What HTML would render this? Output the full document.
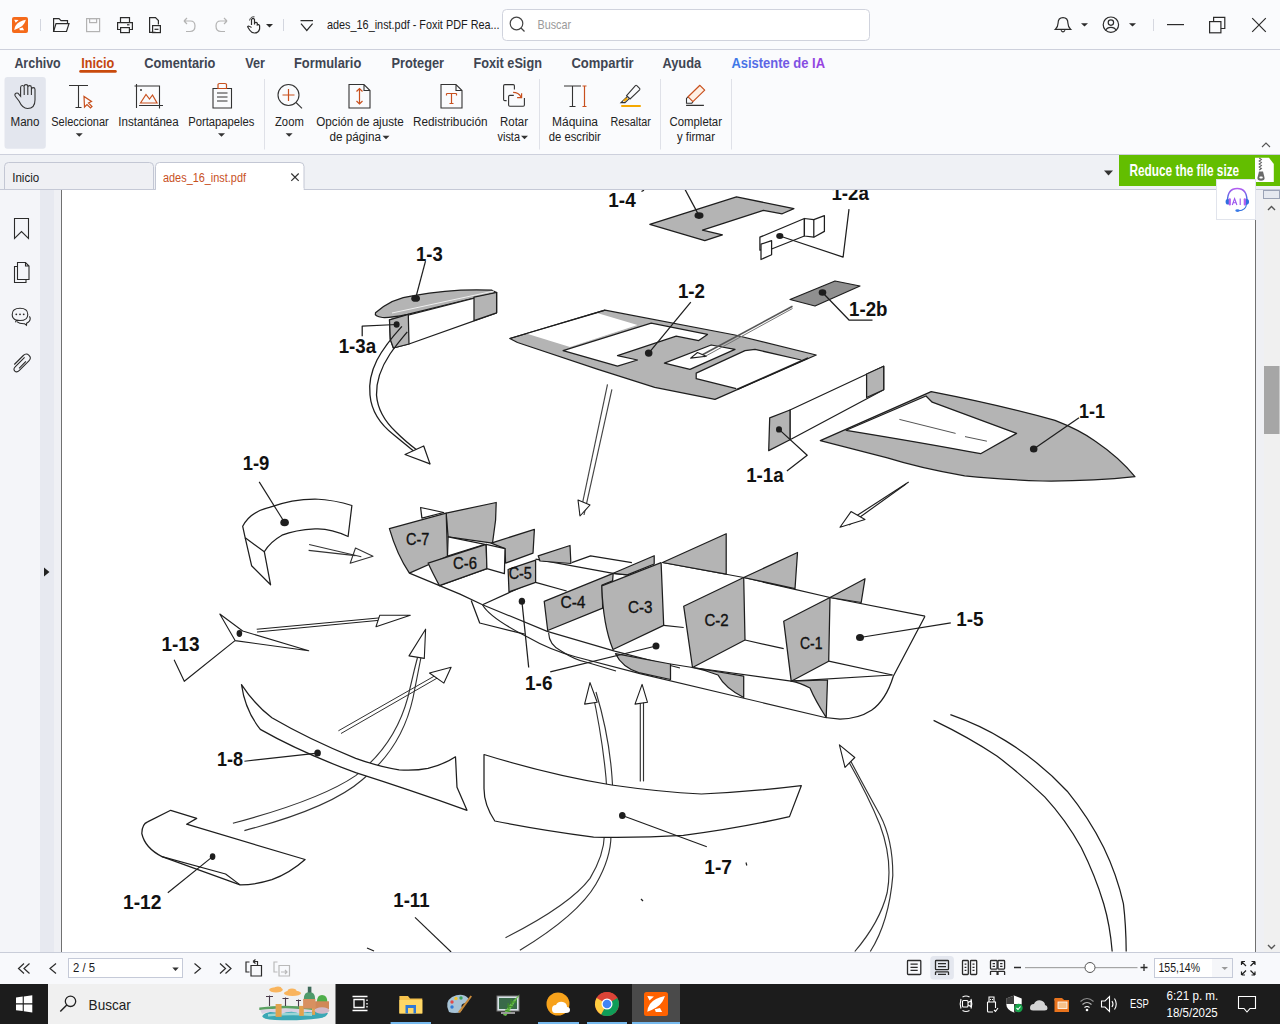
<!DOCTYPE html>
<html><head><meta charset="utf-8">
<style>
*{margin:0;padding:0}
html,body{width:1280px;height:1024px;overflow:hidden;background:#f9f9fc}
svg{position:absolute;left:0;top:0;font-family:"Liberation Sans",sans-serif}
</style></head><body>
<svg width="1280" height="1024" viewBox="0 0 1280 1024">

<rect x="0" y="0" width="1280" height="1024" fill="#fafbfd"/>
<rect x="0" y="49" width="1280" height="1" fill="#cdd0dc"/>
<rect x="0" y="154" width="1280" height="1" fill="#cdd0dc"/>
<rect x="0" y="155" width="1280" height="35" fill="#eff1f5"/>
<rect x="0" y="189" width="1280" height="1" fill="#c5c9d6"/>
<rect x="0" y="190" width="40" height="762" fill="#f4f5f9"/>
<rect x="40" y="190" width="14" height="762" fill="#e7e9f0"/>
<rect x="54" y="190" width="7" height="762" fill="#eff0f4"/>
<rect x="61" y="190" width="1" height="762" fill="#707070"/>
<rect x="62" y="190" width="1193" height="762" fill="#ffffff"/>
<rect x="1255" y="190" width="1" height="762" fill="#707070"/>
<rect x="1256" y="190" width="8" height="762" fill="#eff0f4"/>
<rect x="1264" y="190" width="16" height="762" fill="#f0f0f0"/>
<defs><clipPath id="pg"><rect x="62" y="190" width="1193" height="762"/></clipPath></defs><g clip-path="url(#pg)"><polygon points="649.8,224.3 736.5,196.9 793.9,208.6 782.2,213.8 763.4,210.3 702.5,230.2 722.4,234.9 704.8,240.7" fill="#b4b4b4" stroke="#1e1e1e" stroke-width="1.25" stroke-linejoin="round"/><ellipse cx="699" cy="215.6" rx="4.5" ry="3.3" fill="#1e1e1e"/><polyline points="699,215.6 684.9,189.2" fill="none" stroke="#1e1e1e" stroke-width="1.25" stroke-linejoin="round"/><text x="608.3" y="206.8" font-size="19.5" font-weight="bold" fill="#111" textLength="27.40000000000009" lengthAdjust="spacingAndGlyphs" >1-4</text><polyline points="641.5,191.5 644,190.2" fill="none" stroke="#1e1e1e" stroke-width="1.25" stroke-linejoin="round"/><polygon points="759.9,237.2 804.4,218.5 804.4,236 771.6,249 759.9,250.1" fill="#fff" stroke="#1e1e1e" stroke-width="1.25" stroke-linejoin="round"/><polygon points="804.4,218.5 813.8,219.6 824.4,215.6 824.4,231.4 813.8,237.2 804.4,236" fill="#fff" stroke="#1e1e1e" stroke-width="1.25" stroke-linejoin="round"/><polyline points="813.8,219.6 813.8,237.2" fill="none" stroke="#1e1e1e" stroke-width="1.25" stroke-linejoin="round"/><polygon points="761,244.2 771.6,240.7 771.6,254.8 761,259.5" fill="#fff" stroke="#1e1e1e" stroke-width="1.25" stroke-linejoin="round"/><ellipse cx="779.8" cy="236" rx="3.6" ry="3" fill="#1e1e1e"/><polyline points="779.8,236 843.1,257.1 849,209.1" fill="none" stroke="#1e1e1e" stroke-width="1.25" stroke-linejoin="round"/><text x="831.4" y="199.7" font-size="19.5" font-weight="bold" fill="#111" textLength="37.5" lengthAdjust="spacingAndGlyphs" >1-2a</text><polygon points="790,299.5 835,281 860,286 815,306" fill="#8f8f8f" stroke="#1e1e1e" stroke-width="1.25" stroke-linejoin="round"/><ellipse cx="822.5" cy="292.5" rx="3.8" ry="3.3" fill="#1e1e1e"/><polyline points="822.5,292.5 849,320 872.5,320" fill="none" stroke="#1e1e1e" stroke-width="1.25" stroke-linejoin="round"/><text x="849" y="316" font-size="19.5" font-weight="bold" fill="#111" textLength="38.5" lengthAdjust="spacingAndGlyphs" >1-2b</text><polygon points="509.8,338.5 605,310.2 735,335 816.2,355 715,399.4 654.7,387.3 598,369.3 517.5,342.5" fill="#b4b4b4" stroke="#1e1e1e" stroke-width="1.25" stroke-linejoin="round"/><polygon points="527,333.8 598,313.2 637.5,325 570,346.9" fill="#fff" stroke="none" stroke-width="1.25" stroke-linejoin="round"/><polyline points="509.8,338.5 605,310.2" fill="none" stroke="#1e1e1e" stroke-width="1.25" stroke-linejoin="round"/><polygon points="563.1,350.6 651.2,323.1 707.5,334.4 698.7,340.6 676.2,336.2 617.5,355.6 637.5,360 617.5,366.2" fill="#fff" stroke="#1e1e1e" stroke-width="1.25" stroke-linejoin="round"/><polygon points="664.4,363.1 711.2,345 735,349.4 690,369.4" fill="#fff" stroke="#1e1e1e" stroke-width="1.25" stroke-linejoin="round"/><polygon points="696.2,373.1 745,350.6 755,349.4 801.2,360 736.2,388.7 696.2,378.7" fill="#fff" stroke="none" stroke-width="1.25" stroke-linejoin="round"/><polyline points="736.2,388.7 696.2,378.7 696.2,373.1 745,350.6 755,349.4 801.2,360" fill="none" stroke="#1e1e1e" stroke-width="1.25" stroke-linejoin="round"/><polyline points="737,389.5 808,358" fill="none" stroke="#1e1e1e" stroke-width="1.4" stroke-linejoin="round"/><ellipse cx="648.7" cy="353.1" rx="3.8" ry="3.6" fill="#1e1e1e"/><polyline points="648.7,353.1 690.8,302.2" fill="none" stroke="#1e1e1e" stroke-width="1.25" stroke-linejoin="round"/><text x="677.9" y="298.4" font-size="19.5" font-weight="bold" fill="#111" textLength="27.100000000000023" lengthAdjust="spacingAndGlyphs" >1-2</text><polyline points="792.5,306.2 702,355" fill="none" stroke="#555" stroke-width="1.6" stroke-linejoin="round"/><polyline points="792.5,308.5 704,357" fill="none" stroke="#777" stroke-width="1.0" stroke-linejoin="round"/><polygon points="690.6,358.1 706.2,356.2 697.5,352.5" fill="#fff" stroke="#1e1e1e" stroke-width="1.1" stroke-linejoin="round"/><path d="M375.5 312.8 Q392 298 413.8 295.6 Q452 288.5 491.9 290.2 L496.6 292.5 L407.5 314.4 Q390 318 382.5 317.5 Q374 316.5 375.5 312.8 Z" fill="#b4b4b4" stroke="#1e1e1e" stroke-width="1.25" stroke-linejoin="round"/><polyline points="392,313 494,291" fill="none" stroke="#f0f0f0" stroke-width="1.0" stroke-linejoin="round"/><polygon points="389.5,319.8 496.6,292.5 496.6,312.8 409,344 393.4,348 390.3,339.4" fill="#fff" stroke="#1e1e1e" stroke-width="1.25" stroke-linejoin="round"/><polygon points="389.5,319.8 408.3,314.4 409,344 393.4,348 390.3,339.4" fill="#b4b4b4" stroke="#1e1e1e" stroke-width="1.25" stroke-linejoin="round"/><polygon points="474,297.2 496.6,292.5 496.6,312.8 474,320.6" fill="#b4b4b4" stroke="#1e1e1e" stroke-width="1.25" stroke-linejoin="round"/><ellipse cx="415.6" cy="298.4" rx="4.4" ry="3.4" fill="#1e1e1e"/><polyline points="415.6,298.4 425.5,261.2" fill="none" stroke="#1e1e1e" stroke-width="1.25" stroke-linejoin="round"/><text x="416" y="260.5" font-size="19.5" font-weight="bold" fill="#111" textLength="26.69999999999999" lengthAdjust="spacingAndGlyphs" >1-3</text><ellipse cx="396.6" cy="324.5" rx="3" ry="3.2" fill="#1e1e1e"/><polyline points="396.6,324.5 362.2,326.1 362.2,336.2" fill="none" stroke="#1e1e1e" stroke-width="1.25" stroke-linejoin="round"/><text x="338.7" y="352.7" font-size="19.5" font-weight="bold" fill="#111" textLength="37.5" lengthAdjust="spacingAndGlyphs" >1-3a</text><path d="M401.9 326.4 Q385 345 377 360 Q368 378 370 395 Q372 418 394 435 Q412 450 430 463.9" fill="none" stroke="#1e1e1e" stroke-width="1.3" stroke-linejoin="round"/><path d="M407.3 331.9 Q397 344 390 354 Q376 375 376.5 395 Q378 415 396 432 Q405 441 417.5 450.6" fill="none" stroke="#1e1e1e" stroke-width="1.3" stroke-linejoin="round"/><polygon points="405,454.5 423.7,446 430,463.9" fill="#fff" stroke="#1e1e1e" stroke-width="1.25" stroke-linejoin="round"/><path d="M820.3 440.6 L931.2 391.6 Q1000 405 1055 420.3 Q1080 430 1095 441 Q1120 458 1134.9 476.7 Q1090 481.5 1042 481 Q1000 479.5 964.7 475.8 Q920 468 887.4 457.8 Z" fill="#b4b4b4" stroke="#1e1e1e" stroke-width="1.25" stroke-linejoin="round"/><path d="M846.2 430.3 L926 396 L932.2 402.2 L1016.6 433.4 L980.6 453.7 Q930 444 846.2 430.3 Z" fill="#fff" stroke="#1e1e1e" stroke-width="1.25" stroke-linejoin="round"/><polyline points="899.4,419.4 955.6,433.4" fill="none" stroke="#555" stroke-width="1.0" stroke-linejoin="round"/><polyline points="965,436.6 986.9,441.2" fill="none" stroke="#555" stroke-width="1.0" stroke-linejoin="round"/><ellipse cx="1033.7" cy="449" rx="3.8" ry="3.6" fill="#1e1e1e"/><polyline points="1033.7,449 1079,417.8" fill="none" stroke="#1e1e1e" stroke-width="1.25" stroke-linejoin="round"/><text x="1079" y="417.8" font-size="19.5" font-weight="bold" fill="#111" textLength="26" lengthAdjust="spacingAndGlyphs" >1-1</text><polygon points="790,410 883.7,366.2 883.7,389.7 790,439.7" fill="#fff" stroke="#1e1e1e" stroke-width="1.25" stroke-linejoin="round"/><polygon points="769.7,417.8 790,410 790,439.7 768.7,450.6" fill="#b4b4b4" stroke="#1e1e1e" stroke-width="1.25" stroke-linejoin="round"/><polygon points="866.6,374 883.7,366.2 883.7,389.7 866.6,397.5" fill="#b4b4b4" stroke="#1e1e1e" stroke-width="1.25" stroke-linejoin="round"/><ellipse cx="779" cy="429.4" rx="3" ry="3.2" fill="#1e1e1e"/><polyline points="779,429.4 807.2,455.3 786.9,471" fill="none" stroke="#1e1e1e" stroke-width="1.25" stroke-linejoin="round"/><text x="746.2" y="481.9" font-size="19.5" font-weight="bold" fill="#111" textLength="37.5" lengthAdjust="spacingAndGlyphs" >1-1a</text><polyline points="908.7,481.9 847,522" fill="none" stroke="#1e1e1e" stroke-width="1.15" stroke-linejoin="round"/><polyline points="906,484 849,525" fill="none" stroke="#1e1e1e" stroke-width="1.15" stroke-linejoin="round"/><polygon points="851,511.6 840,527.2 865,519.4" fill="#fff" stroke="#1e1e1e" stroke-width="1.1" stroke-linejoin="round"/><polyline points="607.5,384.4 580,515" fill="none" stroke="#444" stroke-width="1.15" stroke-linejoin="round"/><polyline points="611.9,389.4 584,515" fill="none" stroke="#444" stroke-width="1.15" stroke-linejoin="round"/><polygon points="578,500 580,516 590,505" fill="#fff" stroke="#1e1e1e" stroke-width="1.1" stroke-linejoin="round"/></g><g clip-path="url(#pg)"><polyline points="409.4,573.1 460,594.1 482.5,604.7" fill="none" stroke="#1e1e1e" stroke-width="1.25" stroke-linejoin="round"/><polyline points="482.5,604.7 526.1,585" fill="none" stroke="#1e1e1e" stroke-width="1.25" stroke-linejoin="round"/><polyline points="482.5,604.7 547.2,631.4 614.7,651.1 680,668" fill="none" stroke="#222" stroke-width="1.15" stroke-linejoin="round"/><path d="M482.5 604.7 Q490 618 527.5 637 Q550 650 575.3 656.7 L640 673.6 L825 717.5" fill="none" stroke="#222" stroke-width="1.15" stroke-linejoin="round"/><polyline points="471.2,600.5 479.7,623 524.7,634.2" fill="none" stroke="#1e1e1e" stroke-width="1.25" stroke-linejoin="round"/><path d="M548.6 632.8 Q549 645 561.2 651 Q575 660 586.6 662.3 L616 671" fill="none" stroke="#222" stroke-width="1.15" stroke-linejoin="round"/><polyline points="535.6,582.4 566.6,591" fill="none" stroke="#1e1e1e" stroke-width="1.25" stroke-linejoin="round"/><polyline points="663.7,625.4 683.7,627.5" fill="none" stroke="#1e1e1e" stroke-width="1.25" stroke-linejoin="round"/><polyline points="745,640 783.7,648.7" fill="none" stroke="#1e1e1e" stroke-width="1.25" stroke-linejoin="round"/><polyline points="828.7,661.2 892.5,675" fill="none" stroke="#1e1e1e" stroke-width="1.25" stroke-linejoin="round"/><polyline points="692.5,667.5 791.2,681.2 892.5,675" fill="none" stroke="#1e1e1e" stroke-width="1.25" stroke-linejoin="round"/><polyline points="670.5,664 692.5,667.5" fill="none" stroke="#1e1e1e" stroke-width="1.25" stroke-linejoin="round"/><polyline points="439.4,585.6 486.9,568.7" fill="none" stroke="#1e1e1e" stroke-width="1.25" stroke-linejoin="round"/><polyline points="535.6,559.2 613.2,573.3 627.3,574.8" fill="none" stroke="#1e1e1e" stroke-width="1.25" stroke-linejoin="round"/><polyline points="571.7,562.7 590.6,555.8 631.9,562.7" fill="none" stroke="#1e1e1e" stroke-width="1.25" stroke-linejoin="round"/><polyline points="662.5,562.5 743.7,577.5 830,597.5 925,616.2" fill="none" stroke="#1e1e1e" stroke-width="1.25" stroke-linejoin="round"/><path d="M925 616.2 L893.3 676.2 Q886 700 871.5 710.3 Q858 719 840 719.2 L825 717.5" fill="none" stroke="#1e1e1e" stroke-width="1.25" stroke-linejoin="round"/><path d="M615.5 653.7 L670.5 664 L670.5 679.5 L638.7 672.7 Q622 667 615.5 653.7 Z" fill="#b4b4b4" stroke="#1e1e1e" stroke-width="1.25" stroke-linejoin="round"/><path d="M692.5 667.5 L743.7 676.2 L743.7 697.5 Q725 688 718 675 Q705 670 692.5 667.5 Z" fill="#b4b4b4" stroke="#1e1e1e" stroke-width="1.25" stroke-linejoin="round"/><path d="M791.2 681.2 L827.5 680 L826.2 717.5 Q815 700 810 688 Q800 683 791.2 681.2 Z" fill="#b4b4b4" stroke="#1e1e1e" stroke-width="1.25" stroke-linejoin="round"/><polygon points="446.2,513.1 496.2,502.5 495.6,520 492.5,543.1 448.1,536.9" fill="#b4b4b4" stroke="#1e1e1e" stroke-width="1.25" stroke-linejoin="round"/><polygon points="420.6,507.5 443.7,512.5 421.9,518.1" fill="#fff" stroke="#1e1e1e" stroke-width="1.25" stroke-linejoin="round"/><polygon points="491.2,543.1 534.4,529.4 533,553.2 505.6,563.1 505,548.7" fill="#b4b4b4" stroke="#1e1e1e" stroke-width="1.25" stroke-linejoin="round"/><polygon points="538.2,555.8 570,545.5 570.9,563.5 540,561" fill="#b4b4b4" stroke="#1e1e1e" stroke-width="1.25" stroke-linejoin="round"/><polygon points="613.2,573.3 654.2,555.7 654.2,564 627.3,574.8" fill="#b4b4b4" stroke="#1e1e1e" stroke-width="1.25" stroke-linejoin="round"/><polygon points="662.5,562.5 726.2,533.7 726.2,574.2" fill="#b4b4b4" stroke="#1e1e1e" stroke-width="1.25" stroke-linejoin="round"/><polygon points="743.7,577.5 797.5,552.5 795,588.7" fill="#b4b4b4" stroke="#1e1e1e" stroke-width="1.25" stroke-linejoin="round"/><polygon points="830,597.5 865,578.7 861.2,602.5" fill="#b4b4b4" stroke="#1e1e1e" stroke-width="1.25" stroke-linejoin="round"/><path d="M389.4 528.7 L446.2 513.1 L447.5 556.2 L409.4 573.1 Q397 555 389.4 528.7 Z" fill="#b4b4b4" stroke="#1e1e1e" stroke-width="1.25" stroke-linejoin="round"/><polygon points="448.1,536.9 485,544.4 447.5,556.2" fill="#fff" stroke="#1e1e1e" stroke-width="1.25" stroke-linejoin="round"/><path d="M428.1 563.1 L486.2 544.4 L486.9 568.7 L439.4 585.6 Q432 572 428.1 563.1 Z" fill="#b4b4b4" stroke="#1e1e1e" stroke-width="1.25" stroke-linejoin="round"/><polygon points="486.2,544.4 505,548.7 504.4,573.7 486.9,568.7" fill="#fff" stroke="#1e1e1e" stroke-width="1.25" stroke-linejoin="round"/><polygon points="508.1,569.5 535.6,560.1 535.6,582.4 509,591.9" fill="#b4b4b4" stroke="#1e1e1e" stroke-width="1.25" stroke-linejoin="round"/><polygon points="544.2,601.3 613.2,573.3 612.6,580.9 602,585 602.7,608.2 547.7,630.5" fill="#b4b4b4" stroke="#1e1e1e" stroke-width="1.25" stroke-linejoin="round"/><path d="M601.8 585.9 L661.1 562.7 L663.7 625.4 L613 649.5 Q603 625 601.8 585.9 Z" fill="#b4b4b4" stroke="#1e1e1e" stroke-width="1.25" stroke-linejoin="round"/><polygon points="683.7,606.2 743.7,577.5 745,640 692.5,667.5" fill="#b4b4b4" stroke="#1e1e1e" stroke-width="1.25" stroke-linejoin="round"/><polygon points="783.7,621.2 830,597.5 828.7,661.2 791.2,681.2" fill="#b4b4b4" stroke="#1e1e1e" stroke-width="1.25" stroke-linejoin="round"/><text x="406" y="545" font-size="15.6" font-weight="normal" fill="#111" textLength="23.399999999999977" lengthAdjust="spacingAndGlyphs" stroke="#111" stroke-width="0.35">C-7</text><text x="453" y="569.4" font-size="15.6" font-weight="normal" fill="#111" textLength="23.899999999999977" lengthAdjust="spacingAndGlyphs" stroke="#111" stroke-width="0.35">C-6</text><text x="508.7" y="579.4" font-size="15.6" font-weight="normal" fill="#111" textLength="23.19999999999999" lengthAdjust="spacingAndGlyphs" stroke="#111" stroke-width="0.35">C-5</text><text x="560.5" y="607.5" font-size="15.6" font-weight="normal" fill="#111" textLength="25.0" lengthAdjust="spacingAndGlyphs" stroke="#111" stroke-width="0.35">C-4</text><text x="628" y="612.5" font-size="15.6" font-weight="normal" fill="#111" textLength="24.5" lengthAdjust="spacingAndGlyphs" stroke="#111" stroke-width="0.35">C-3</text><text x="704.5" y="626.2" font-size="15.6" font-weight="normal" fill="#111" textLength="24.200000000000045" lengthAdjust="spacingAndGlyphs" stroke="#111" stroke-width="0.35">C-2</text><text x="800" y="648.7" font-size="15.6" font-weight="normal" fill="#111" textLength="22.5" lengthAdjust="spacingAndGlyphs" stroke="#111" stroke-width="0.35">C-1</text><ellipse cx="521.9" cy="601.3" rx="3.2" ry="3.5" fill="#1e1e1e"/><polyline points="521.9,601.3 528.7,667.5" fill="none" stroke="#1e1e1e" stroke-width="1.25" stroke-linejoin="round"/><ellipse cx="656" cy="646" rx="3.5" ry="3.5" fill="#1e1e1e"/><polyline points="656,646 550.2,671.8" fill="none" stroke="#1e1e1e" stroke-width="1.25" stroke-linejoin="round"/><text x="525" y="690" font-size="19.5" font-weight="bold" fill="#111" textLength="27.5" lengthAdjust="spacingAndGlyphs" >1-6</text><ellipse cx="860" cy="637.5" rx="4" ry="3.6" fill="#1e1e1e"/><polyline points="860,637.5 950.8,622.8" fill="none" stroke="#1e1e1e" stroke-width="1.25" stroke-linejoin="round"/><text x="956.2" y="625.8" font-size="19.5" font-weight="bold" fill="#111" textLength="27.399999999999977" lengthAdjust="spacingAndGlyphs" >1-5</text></g><g clip-path="url(#pg)"><path d="M242.7 526.3 Q250 512 269.4 507.3 Q292 499 315 499 Q335 500 351.9 505.5 L348.1 536.5 Q330 528 315 528.9 Q295 530 282 535.2 Q270 542 264.3 551.7 L245.2 537.8 Z" fill="#fff" stroke="#1e1e1e" stroke-width="1.25" stroke-linejoin="round"/><polyline points="245.2,537.8 251.6,565.7 270.6,584.8 264.3,551.7" fill="none" stroke="#1e1e1e" stroke-width="1.25" stroke-linejoin="round"/><ellipse cx="284.6" cy="522.5" rx="4.3" ry="3.8" fill="#1e1e1e"/><polyline points="284.6,522.5 259.2,481.9" fill="none" stroke="#1e1e1e" stroke-width="1.15" stroke-linejoin="round"/><text x="242.7" y="470" font-size="19.5" font-weight="bold" fill="#111" textLength="26.69999999999999" lengthAdjust="spacingAndGlyphs" >1-9</text><polygon points="355.5,548 373,556.2 350.2,563.3" fill="#fff" stroke="#333" stroke-width="1.1" stroke-linejoin="round"/><polyline points="309.1,544.5 361.3,556.8" fill="none" stroke="#333" stroke-width="1.1" stroke-linejoin="round"/><polyline points="308.6,550.4 355.5,555.6" fill="none" stroke="#333" stroke-width="1.1" stroke-linejoin="round"/><polygon points="219.8,614 235.1,640.6 308.7,650.8 242.7,631" fill="#fff" stroke="#1e1e1e" stroke-width="1.1" stroke-linejoin="round"/><ellipse cx="239.4" cy="633.5" rx="2.8" ry="3.4" fill="#1e1e1e"/><polyline points="235,640.6 184.3,681.3 174.1,659.7" fill="none" stroke="#1e1e1e" stroke-width="1.15" stroke-linejoin="round"/><text x="161.4" y="650.8" font-size="19.5" font-weight="bold" fill="#111" textLength="38.099999999999994" lengthAdjust="spacingAndGlyphs" >1-13</text><polyline points="256.7,629.2 400,616" fill="none" stroke="#1e1e1e" stroke-width="1.15" stroke-linejoin="round"/><polyline points="257,632 398,618.5" fill="none" stroke="#1e1e1e" stroke-width="1.15" stroke-linejoin="round"/><polygon points="376,626.7 410.3,615.2 379.8,615.2" fill="#fff" stroke="#1e1e1e" stroke-width="1.1" stroke-linejoin="round"/><path d="M232.9 823.3 Q320 800 355.7 775.6 Q395 745 407.8 697.6 Q414 670 422 640" fill="none" stroke="#333" stroke-width="1.15" stroke-linejoin="round"/><path d="M244.4 830.6 Q330 808 362 780 Q402 748 413 698 Q418 672 424 642" fill="none" stroke="#333" stroke-width="1.15" stroke-linejoin="round"/><polygon points="409,655.9 425.6,629.2 424.3,658.4" fill="#fff" stroke="#1e1e1e" stroke-width="1.1" stroke-linejoin="round"/><polyline points="338.4,730.8 445,670" fill="none" stroke="#333" stroke-width="1.0" stroke-linejoin="round"/><polyline points="341,733.5 446,673" fill="none" stroke="#333" stroke-width="1.0" stroke-linejoin="round"/><polygon points="429.5,673 451.1,667.2 443.9,683.1" fill="#fff" stroke="#1e1e1e" stroke-width="1.1" stroke-linejoin="round"/><path d="M241.5 684.6 Q255 705 271.9 717.8 Q310 740 355.7 758.3 Q380 767 399.1 769.9 Q415 771 428 768.4 Q445 764 455.5 756.8 L457 787.2 L467 810.3 Q410 790 355.7 772.7 Q300 752 260.3 729.4 Q245 710 241.5 684.6 Z" fill="#fff" stroke="#1e1e1e" stroke-width="1.25" stroke-linejoin="round"/><ellipse cx="317.6" cy="753.1" rx="3.3" ry="3.5" fill="#1e1e1e"/><polyline points="317.6,753.1 244.4,761.2" fill="none" stroke="#1e1e1e" stroke-width="1.15" stroke-linejoin="round"/><text x="217" y="766.4" font-size="19.5" font-weight="bold" fill="#111" textLength="26" lengthAdjust="spacingAndGlyphs" >1-8</text><path d="M170.7 810.3 L196.7 818.4 L186.6 824.2 L305.1 859.5 Q290 873 271.9 879.7 Q255 885 240.1 884.9 L162 856.6 Q145 848 141.8 833.5 Q142 824 147.6 821.9 Z" fill="#fff" stroke="#1e1e1e" stroke-width="1.25" stroke-linejoin="round"/><polyline points="162,856.6 225.6,874 240.1,884.9" fill="none" stroke="#1e1e1e" stroke-width="1.15" stroke-linejoin="round"/><ellipse cx="212.6" cy="856.6" rx="2.8" ry="3.4" fill="#1e1e1e"/><polyline points="212.6,856.6 167.8,892.7" fill="none" stroke="#1e1e1e" stroke-width="1.15" stroke-linejoin="round"/><text x="123" y="909.2" font-size="19.5" font-weight="bold" fill="#111" textLength="38.5" lengthAdjust="spacingAndGlyphs" >1-12</text><text x="393.3" y="907.2" font-size="19.5" font-weight="bold" fill="#111" textLength="36.19999999999999" lengthAdjust="spacingAndGlyphs" >1-11</text><polyline points="415,917.3 451.1,952" fill="none" stroke="#1e1e1e" stroke-width="1.15" stroke-linejoin="round"/><polyline points="367,948 374,951" fill="none" stroke="#1e1e1e" stroke-width="1.25" stroke-linejoin="round"/><path d="M505.5 937.7 Q570 905 590 878.4 Q604 855 604.4 835.3 Q608 800 606 777.8 Q602 735 592 690" fill="none" stroke="#333" stroke-width="1.15" stroke-linejoin="round"/><path d="M519.9 950.3 Q578 915 596 884 Q611 858 611 835 Q614 800 612 777 Q609 735 596 692" fill="none" stroke="#333" stroke-width="1.15" stroke-linejoin="round"/><polygon points="584.6,704.1 590,682.6 597.2,702.3" fill="#fff" stroke="#1e1e1e" stroke-width="1.1" stroke-linejoin="round"/><polyline points="640.3,781.4 640.3,694" fill="none" stroke="#333" stroke-width="1.15" stroke-linejoin="round"/><polyline points="643.5,781.4 643.5,694" fill="none" stroke="#333" stroke-width="1.15" stroke-linejoin="round"/><polygon points="635,704.1 642.1,684.4 647.5,702.3" fill="#fff" stroke="#1e1e1e" stroke-width="1.1" stroke-linejoin="round"/><path d="M484 754.5 Q550 775 611.6 785 Q660 792 701.4 794 Q750 792 801.3 785.7 L789.5 816.6 Q740 828 683.4 835.3 Q640 838 593.6 837.1 Q540 830 494.8 821 Q484 805 484 788.6 Z" fill="#fff" stroke="#1e1e1e" stroke-width="1.25" stroke-linejoin="round"/><ellipse cx="622.3" cy="815.5" rx="3.3" ry="3.6" fill="#1e1e1e"/><polyline points="622.3,815.5 706.8,846.8" fill="none" stroke="#1e1e1e" stroke-width="1.15" stroke-linejoin="round"/><text x="704.3" y="874.1" font-size="19.5" font-weight="bold" fill="#111" textLength="27.700000000000045" lengthAdjust="spacingAndGlyphs" >1-7</text><polyline points="746,862.5 746.8,865.5" fill="none" stroke="#1e1e1e" stroke-width="1.2" stroke-linejoin="round"/><polyline points="641,899 643,901" fill="none" stroke="#1e1e1e" stroke-width="1.25" stroke-linejoin="round"/><path d="M933.6 720.4 Q970 738 996.9 756.1 Q1022 775 1044.7 796.9 Q1066 820 1081.2 847.5 Q1095 875 1103.7 903.7 Q1110 925 1112.2 951.5" fill="none" stroke="#1e1e1e" stroke-width="1.25" stroke-linejoin="round"/><path d="M950.4 714.7 Q980 725 1005.3 740.6 Q1040 762 1067.2 791.2 Q1089 818 1103.7 847.5 Q1117 875 1123.4 903.7 Q1126 925 1126.2 951.5" fill="none" stroke="#1e1e1e" stroke-width="1.25" stroke-linejoin="round"/><path d="M854.8 951.5 Q880 922 887.2 892.5 Q893 860 880 825 Q868 795 846 757" fill="none" stroke="#333" stroke-width="1.15" stroke-linejoin="round"/><path d="M870.3 951.5 Q889 922 892.8 875.6 Q893 840 880 815 Q866 790 848 756" fill="none" stroke="#333" stroke-width="1.15" stroke-linejoin="round"/><polygon points="839.4,744.8 854.8,757.5 845,767.3" fill="#fff" stroke="#1e1e1e" stroke-width="1.1" stroke-linejoin="round"/></g>
<rect x="12" y="17" width="16" height="16" rx="2" fill="#f56a1a"/>
<path d="M14.2 19.7 L18.6 19.9 L15.7 22.7 Z M19.2 28.5 L22.7 27.6 L24.1 30.3 L19.9 30.3 Z" fill="#fff"/>
<path d="M14.2 30.1 Q14.7 24.3 20 21.7 Q22.7 20.3 25.9 19.7 Q25 22.3 24.2 23.5 Q22.3 26.3 20.2 27.3 Q17.3 29 14.2 30.1 Z" fill="#fff"/>
<line x1="40.5" y1="19" x2="40.5" y2="31" stroke="#d3d6df"/>
<g fill="none" stroke="#2b2b2b" stroke-width="1.2">
 <path d="M53.6 31.5 V18.6 H59 L61 20.6 H67.5 V23.5"/><path d="M53.6 31.5 L56 23.6 H69 L66.5 31.5 Z"/>
 <path d="M120.5 29.5 H117.6 V22.6 H132.4 V29.5 H129.5"/><path d="M120.5 22.5 V17.6 H129.5 V22.5"/><rect x="120.6" y="27.6" width="8.8" height="5"/><line x1="127" y1="24.8" x2="129.5" y2="24.8"/>
 <path d="M155.5 32.4 H149.6 V17.6 H155.5 L158.4 20.5 V24.5"/><rect x="152.6" y="25.6" width="7.8" height="7"/><line x1="154.5" y1="29.3" x2="158.5" y2="29.3"/>
 <path d="M251.5 25 V19.6 Q253 17.3 254.5 19.6 V24.5 M254.5 23 Q256 21.6 257.3 23.2 V25 Q258.8 24 259.6 25.7 V29 Q258.5 33 254.5 33 Q251.5 33 249.8 30.3 L247.6 26.8 Q248.5 25.3 251.5 27.5"/>
 <path d="M249.5 20.5 Q250.5 16.3 254.5 16.8" stroke-width="0.9"/>
</g>
<g fill="none" stroke="#b3b3b3" stroke-width="1.2">
 <rect x="86.6" y="18.6" width="13" height="13"/><rect x="89.6" y="18.6" width="7" height="4"/>
 <path d="M184 21 H190.5 Q195 21 195 26 Q195 31.5 190 31.5 H186 M184 21 L187 18 M184 21 L187 24"/>
 <path d="M227 21 H220.5 Q216 21 216 26 Q216 31.5 221 31.5 H225 M227 21 L224 18 M227 21 L224 24"/>
</g>
<path d="M266 24 H273 L269.5 27.5 Z" fill="#2b2b2b"/>
<line x1="283.5" y1="19" x2="283.5" y2="31" stroke="#d3d6df"/>
<path d="M300.5 20.6 H313 M301 23.6 L306.8 30.5 L312.6 23.6" fill="none" stroke="#2b2b2b" stroke-width="1.2"/>
<text x="327" y="29.3" font-size="13" font-weight="normal" fill="#1a1a1a" textLength="172.6" lengthAdjust="spacingAndGlyphs" >ades_16_inst.pdf - Foxit PDF Rea...</text>
<rect x="502.5" y="9.5" width="367" height="31" rx="4" fill="#fff" stroke="#d0d3dd"/>
<circle cx="516.5" cy="23.5" r="6.3" fill="none" stroke="#444" stroke-width="1.2"/><line x1="521" y1="28" x2="524.5" y2="31.5" stroke="#444" stroke-width="1.3"/>
<text x="537.5" y="29.3" font-size="13" font-weight="normal" fill="#9a9a9a" textLength="33.5" lengthAdjust="spacingAndGlyphs" >Buscar</text>
<g fill="none" stroke="#2b2b2b" stroke-width="1.2">
 <path d="M1055.3 29.4 H1070.7 Q1068 27 1067.9 23 Q1067.9 17.6 1063 17.6 Q1058.1 17.6 1058.1 23 Q1058 27 1055.3 29.4 Z M1061 30.3 Q1063 33.5 1065 30.3"/>
 <circle cx="1110.9" cy="24.7" r="7.7"/><circle cx="1110.9" cy="22.6" r="2.7"/><path d="M1105.6 30.4 Q1107 27.3 1110.9 27.3 Q1114.8 27.3 1116.2 30.4"/>
 <line x1="1167" y1="24.6" x2="1184" y2="24.6"/>
 <rect x="1209.6" y="21.6" width="11.3" height="11.2"/><path d="M1213.6 21.6 V17.4 H1224.8 V28.5 H1220.9"/>
 <path d="M1252.2 18.2 L1265.8 31.8 M1265.8 18.2 L1252.2 31.8"/>
</g>
<path d="M1081 23.2 H1088 L1084.5 26.6 Z M1129 23.2 H1136 L1132.5 26.6 Z" fill="#2b2b2b"/>
<line x1="1153.5" y1="19" x2="1153.5" y2="31" stroke="#d6d8e0"/>
<text x="14.4" y="68" font-size="14" font-weight="bold" fill="#404552" textLength="46.300000000000004" lengthAdjust="spacingAndGlyphs" >Archivo</text><text x="144.3" y="68" font-size="14" font-weight="bold" fill="#404552" textLength="71.1" lengthAdjust="spacingAndGlyphs" >Comentario</text><text x="245.2" y="68" font-size="14" font-weight="bold" fill="#404552" textLength="19.80000000000001" lengthAdjust="spacingAndGlyphs" >Ver</text><text x="294" y="68" font-size="14" font-weight="bold" fill="#404552" textLength="67.30000000000001" lengthAdjust="spacingAndGlyphs" >Formulario</text><text x="391.5" y="68" font-size="14" font-weight="bold" fill="#404552" textLength="52.5" lengthAdjust="spacingAndGlyphs" >Proteger</text><text x="473.5" y="68" font-size="14" font-weight="bold" fill="#404552" textLength="68.39999999999998" lengthAdjust="spacingAndGlyphs" >Foxit eSign</text><text x="571.4" y="68" font-size="14" font-weight="bold" fill="#404552" textLength="62.200000000000045" lengthAdjust="spacingAndGlyphs" >Compartir</text><text x="662.4" y="68" font-size="14" font-weight="bold" fill="#404552" textLength="38.80000000000007" lengthAdjust="spacingAndGlyphs" >Ayuda</text><text x="81.2" y="68" font-size="14" font-weight="bold" fill="#c4460d" textLength="33.1" lengthAdjust="spacingAndGlyphs" >Inicio</text><rect x="79.2" y="70" width="37.6" height="2.8" rx="1.4" fill="#c94a0c"/><defs><linearGradient id="ia" x1="0" x2="1" y1="0" y2="0"><stop offset="0" stop-color="#3b7ae8"/><stop offset="1" stop-color="#9a3fe0"/></linearGradient></defs><text x="731.4" y="68" font-size="14" font-weight="bold" fill="url(#ia)" textLength="93.6" lengthAdjust="spacingAndGlyphs" >Asistente de IA</text><rect x="4.5" y="77" width="41.3" height="71.7" rx="3" fill="#e3e6ee"/><line x1="264.5" y1="79" x2="264.5" y2="149.5" stroke="#dfe1e8"/><line x1="539.5" y1="79" x2="539.5" y2="149.5" stroke="#dfe1e8"/><line x1="660.5" y1="79" x2="660.5" y2="149.5" stroke="#dfe1e8"/><line x1="731.5" y1="79" x2="731.5" y2="149.5" stroke="#dfe1e8"/><text x="10.5" y="126" font-size="12.5" font-weight="normal" fill="#222" textLength="29.0" lengthAdjust="spacingAndGlyphs" >Mano</text><text x="51.25" y="126" font-size="12.5" font-weight="normal" fill="#222" textLength="57.5" lengthAdjust="spacingAndGlyphs" >Seleccionar</text><text x="118.25" y="126" font-size="12.5" font-weight="normal" fill="#222" textLength="60.5" lengthAdjust="spacingAndGlyphs" >Instantánea</text><text x="188.25" y="126" font-size="12.5" font-weight="normal" fill="#222" textLength="66.25" lengthAdjust="spacingAndGlyphs" >Portapapeles</text><text x="275" y="126" font-size="12.5" font-weight="normal" fill="#222" textLength="28.75" lengthAdjust="spacingAndGlyphs" >Zoom</text><text x="316.25" y="126" font-size="12.5" font-weight="normal" fill="#222" textLength="87.5" lengthAdjust="spacingAndGlyphs" >Opción de ajuste</text><text x="329.5" y="141" font-size="12.5" font-weight="normal" fill="#222" textLength="51.5" lengthAdjust="spacingAndGlyphs" >de página</text><text x="413" y="126" font-size="12.5" font-weight="normal" fill="#222" textLength="74.5" lengthAdjust="spacingAndGlyphs" >Redistribución</text><text x="500" y="126" font-size="12.5" font-weight="normal" fill="#222" textLength="28" lengthAdjust="spacingAndGlyphs" >Rotar</text><text x="497.5" y="141" font-size="12.5" font-weight="normal" fill="#222" textLength="22.5" lengthAdjust="spacingAndGlyphs" >vista</text><text x="552" y="126" font-size="12.5" font-weight="normal" fill="#222" textLength="46" lengthAdjust="spacingAndGlyphs" >Máquina</text><text x="548.75" y="141" font-size="12.5" font-weight="normal" fill="#222" textLength="52.0" lengthAdjust="spacingAndGlyphs" >de escribir</text><text x="610.5" y="126" font-size="12.5" font-weight="normal" fill="#222" textLength="40.25" lengthAdjust="spacingAndGlyphs" >Resaltar</text><text x="669.5" y="126" font-size="12.5" font-weight="normal" fill="#222" textLength="52.5" lengthAdjust="spacingAndGlyphs" >Completar</text><text x="677" y="141" font-size="12.5" font-weight="normal" fill="#222" textLength="38" lengthAdjust="spacingAndGlyphs" >y firmar</text><path d="M75.75 133.2 H82.75 L79.25 136.8 Z" fill="#333"/><path d="M218.0 133.2 H225.0 L221.5 136.8 Z" fill="#333"/><path d="M285.6 133.2 H292.6 L289.1 136.8 Z" fill="#333"/><path d="M382.5 135.7 H389.5 L386 139.3 Z" fill="#333"/><path d="M521.0 135.7 H528.0 L524.5 139.3 Z" fill="#333"/><g fill="none" stroke="#333" stroke-width="1.1">
<path d="M19 101 L15.5 96.5 Q14 94.5 16 93.3 Q17.6 92.5 19 94.3 L20.6 96.2 V87.5 Q20.6 85.5 22.4 85.5 Q24.2 85.5 24.2 87.5 V95 M24.2 86.5 Q24.2 84.6 26 84.6 Q27.8 84.6 27.8 86.5 V95 M27.8 87.5 Q27.8 85.6 29.6 85.6 Q31.4 85.6 31.4 87.5 V95 M31.4 89.5 Q31.4 87.6 33.2 87.6 Q35 87.6 35 89.5 V100 Q35 108.5 27.5 108.5 Q22.5 108.5 19 101"/>
<path d="M69 85.5 H88 M78.5 85.5 V107.5 M75.5 107.5 H81.5"/>
<path d="M136.5 84 V108 M134.5 86 H159.5 V108.5 M139 105.5 H163"/>
<path d="M213 88.5 H231.5 V108 H213 Z M217 93 H227.5 M217 97 H227.5 M217 101 H227.5"/>
<circle cx="288.5" cy="95" r="10.5"/><path d="M296 102.5 L302 108.3"/>
<path d="M349 84.5 H364 L370 90.5 V108 H349 Z M364 84.5 V90.5 H370"/>
<path d="M441 84.5 H456 L462 90.5 V108 H441 Z M456 84.5 V90.5 H462"/>
<path d="M514.4 89.6 V85.8 Q514.4 84.6 513.2 84.6 H504.8 Q503.6 84.6 503.6 85.8 V99.4 Q503.6 100.6 504.8 100.6 H506.6 M513.8 95.4 H509.8 Q508.6 95.4 508.6 96.6 V105 Q508.6 106.2 509.8 106.2 H523.2 Q524.4 106.2 524.4 105 V98.1"/>
<path d="M564 86 H581 M572.5 86 V106.5 M569.5 106.5 H575.5"/>
<path d="M626.6 95.6 L635.4 85.6 Q636.1 85 636.8 85.6 L639.6 88.4 Q640.2 89.1 639.6 89.8 L630.1 98.9 Z M627.5 96.5 L621 102.6 H625 L629.4 98.3"/>
<path d="M688.1 96.8 L686.5 98.4 V103.2 H691.8 L692.9 101.6 M686.1 105.4 H703.9"/>
</g>
<path d="M688.1 96.8 L699.9 85.3 L704.7 90.1 L692.9 101.6 Z" fill="#fef0e4" stroke="#c8501e" stroke-width="1.2" stroke-linejoin="round"/>
<g fill="none" stroke="#c8501e" stroke-width="1.2">
<path d="M84 96.5 L84.5 107 L87 104.5 L90.5 108 L92 106.5 L88.5 103 L91.5 101.5 Z"/>
<path d="M218 84.5 V88.5 H226.5 V84.5 Q226.5 83.5 225 83.5 H219.5 Q218 83.5 218 84.5 Z"/>
<path d="M140.5 103 L146 94.5 L149.5 99 L152.5 95 L157 103 Z"/>
<path d="M282.5 95 H294.5 M288.5 89 V101"/>
<path d="M359.5 88.5 V104 M356.5 91.5 L359.5 88.5 L362.5 91.5 M356.5 101 L359.5 104 L362.5 101"/>
<path d="M446.5 93.5 H456.5 M446.5 93.5 V95.5 M456.5 93.5 V95.5 M451.5 93.5 V103.5 M449.5 103.5 H453.5"/>
<path d="M513.1 92.4 Q518.5 92.4 521.2 97.2 M521.6 93.3 V97.6 H517.1"/>
<path d="M584.5 86 V106.5 M582.5 86 H586.5 M582.5 106.5 H586.5"/>
</g>
<circle cx="141" cy="90" r="1" fill="#333"/>
<path d="M623 100.5 L626.5 97.5 L628 99 L624.5 101.8 Z" fill="#f5a800"/>
<rect x="621" y="105" width="20" height="2" rx="1" fill="#f5a800"/>
<path d="M1262 147 L1266 143 L1270 147" fill="none" stroke="#555" stroke-width="1.1"/>

<path d="M4.5 189 V166.5 Q4.5 162.5 8.5 162.5 H149.5 Q153.5 162.5 153.5 166.5 V189" fill="#eff0f4" stroke="#c3c7d4" stroke-width="1"/>
<path d="M155.5 189.5 V166.5 Q155.5 162.5 159.5 162.5 H300 Q304 162.5 304 166.5 V189.5" fill="#ffffff" stroke="#c3c7d4" stroke-width="1"/>
<rect x="156" y="188" width="147.5" height="3" fill="#fff"/>
<text x="12.2" y="182" font-size="12.5" font-weight="normal" fill="#1a1a1a" textLength="27" lengthAdjust="spacingAndGlyphs" >Inicio</text><text x="163" y="182" font-size="12.5" font-weight="normal" fill="#c8501e" textLength="83" lengthAdjust="spacingAndGlyphs" >ades_16_inst.pdf</text>
<path d="M291.3 173.5 L298.7 180.9 M298.7 173.5 L291.3 180.9" stroke="#333" stroke-width="1.2"/>
<path d="M1104 170.5 H1113 L1108.5 175.5 Z" fill="#333"/>
<rect x="1119" y="155" width="161" height="31" fill="#63be00"/>
<text x="1129.5" y="176" font-size="17" font-weight="bold" fill="#ffffff" textLength="109.7" lengthAdjust="spacingAndGlyphs" >Reduce the file size</text>
<path d="M1255 157.8 H1269 L1273.8 164 V182 H1255 Z" fill="#fff"/>
<path d="M1259.3 158 L1261.3 159.5 L1259.3 161 L1261.3 162.5 L1259.3 164 L1261.3 165.5 L1259.3 167 L1261.3 168.5 L1259.3 170" fill="none" stroke="#666" stroke-width="1.2"/>
<path d="M1259 171.5 H1263 L1264.6 178 Q1264.6 180.8 1261 180.8 Q1257.4 180.8 1257.4 178 Z" fill="#6a6a6a"/>
<rect x="1259.3" y="176.5" width="3.5" height="2" rx="1" fill="#fff"/>
<rect x="1216.5" y="179.5" width="39" height="40" fill="#ffffff" stroke="#e1e4ec"/>
<defs><linearGradient id="hs" x1="0" y1="0" x2="0" y2="1"><stop offset="0" stop-color="#b25cf0"/><stop offset="1" stop-color="#2d6fe0"/></linearGradient></defs>
<path d="M1227.5 201 Q1227.5 188.5 1237.2 188.5 Q1247 188.5 1247 201" fill="none" stroke="url(#hs)" stroke-width="1.4"/>
<ellipse cx="1227.8" cy="201.8" rx="2.2" ry="2.8" fill="#2f6fdf"/>
<ellipse cx="1246.8" cy="201.8" rx="2.2" ry="2.8" fill="#2f6fdf"/>
<rect x="1228.7" y="198.3" width="2.2" height="7.2" rx="1" fill="#b561f0"/>
<rect x="1243.7" y="198.3" width="2.2" height="7.2" rx="1" fill="#b561f0"/>
<path d="M1246.5 204 Q1246 210.5 1238.5 210.8" fill="none" stroke="#2f6fdf" stroke-width="1.1"/>
<ellipse cx="1237.5" cy="210.6" rx="2.2" ry="1.4" fill="#3a7be8"/>
<path d="M1232.3 205 L1234.6 198.6 L1236.9 205 M1233.1 202.8 H1236.1 M1240.2 198.6 V205" fill="none" stroke="#9a55ee" stroke-width="1.1"/>
<rect x="1263.5" y="190.5" width="16" height="8" fill="#e6e9f0" stroke="#9ba3b6"/>
<path d="M1268 210 L1271.5 206.5 L1275 210" fill="none" stroke="#555" stroke-width="1.4"/>
<path d="M1268 945 L1271.5 948.5 L1275 945" fill="none" stroke="#555" stroke-width="1.4"/>
<rect x="1264" y="366" width="15.5" height="68" fill="#a6a6a6"/>
<g fill="none" stroke="#2b2b2b" stroke-width="1.1">
<path d="M14.5 218.5 H28.5 V238.5 L21.5 231.5 L14.5 238.5 Z"/>
<path d="M17.5 264.5 V262.5 H25.5 L29 266 V279.5 H17.5 Z M25.5 262.5 V266 H29"/>
<path d="M17.5 266.5 H14.5 V282.5 H26 V279.5"/>
<path d="M16.3 320.2 Q12.2 318.4 12.2 314.4 Q12.2 308.3 20 308.3 Q27.8 308.3 27.8 314.4 Q27.8 320.5 20 320.5 Q18 320.5 16.6 320.1 L15.4 322.2"/>
<path d="M29.4 316.3 Q30.2 317.3 30.2 318.6 Q30.2 321.8 26.6 323.2 L26.5 325.2 L24.6 323.7 Q19.5 323.9 16.8 321.6"/>
<path d="M14.3 364.5 L23.3 355.5 Q26.2 352.6 29 355.3 Q31.8 358 28.9 360.9 L19.4 370.4 Q16.8 373 14.8 371.1 Q12.8 369.2 15.4 366.6 L24.6 357.4 M19.1 368.3 L25.9 361.4"/>
</g>
<circle cx="16.3" cy="314.3" r="0.9" fill="#2b2b2b"/><circle cx="20" cy="314.3" r="0.9" fill="#2b2b2b"/><circle cx="23.7" cy="314.3" r="0.9" fill="#2b2b2b"/>
<path d="M44 567.5 L49.5 572 L44 576.5 Z" fill="#222"/>

<rect x="0" y="952" width="1280" height="32" fill="#f8f9fc"/>
<rect x="0" y="952" width="1280" height="1" fill="#c9cdd9"/>
<g fill="none" stroke="#2b2b2b" stroke-width="1.2">
<path d="M24 963.5 L18.5 968.5 L24 973.5 M29.5 963.5 L24 968.5 L29.5 973.5"/>
<path d="M56 963.5 L50 968.5 L56 973.5"/>
<path d="M194.5 963.5 L200.5 968.5 L194.5 973.5"/>
<path d="M220 963.5 L225.5 968.5 L220 973.5 M225.5 963.5 L231 968.5 L225.5 973.5"/>
<path d="M249.5 962 H246 V972 H249.5 M251 965.5 H261.5 V976 H251 Z M253 961.5 L255.5 959.5 M253 961.5 L255.5 963.5 M253 961.5 H257.5 V965"/>
</g>
<g fill="none" stroke="#b9b9b9" stroke-width="1.2">
<path d="M277.5 962 H274 V972 H277.5 M279 965.5 H289.5 V976 H279 Z M281 972 H287 M285 970 L287 972 L285 974"/>
</g>
<rect x="68.5" y="958.5" width="114" height="19" fill="#ffffff" stroke="#c5cad8"/>
<path d="M172.3 967.5 H178.8 L175.5 971 Z" fill="#333"/>
<text x="73" y="972.3" font-size="12.5" font-weight="normal" fill="#1a1a1a" textLength="22" lengthAdjust="spacingAndGlyphs" >2 / 5</text>
<rect x="930.3" y="956" width="23.6" height="23.5" rx="3.5" fill="#e4e7ef"/>
<g fill="none" stroke="#2b2b2b" stroke-width="1.3">
<rect x="907.5" y="960.5" width="13.3" height="14" rx="0.8"/><path d="M910.5 964.2 H917.7 M910.5 967.3 H917.7 M910.5 970.3 H917.7"/>
<rect x="935.5" y="960.5" width="13" height="9.2" rx="0.8"/><path d="M938 963.7 H946 M938 966.6 H946 M935.5 975 V972.5 Q935.5 971.8 936.3 971.8 H947.7 Q948.5 971.8 948.5 972.5 V975 M938 974.3 H946"/>
<rect x="962.5" y="960.5" width="5.8" height="14" rx="0.8"/><rect x="970.5" y="960.5" width="6.2" height="14" rx="0.8"/><path d="M964.6 964.2 H966.4 M964.6 967.3 H966.4 M964.6 970.3 H966.4 M972.5 964.2 H974.5 M972.5 967.3 H974.5 M972.5 970.3 H974.5"/>
<rect x="990.5" y="960.5" width="6.6" height="8.6" rx="0.8"/><rect x="998" y="960.5" width="6.6" height="8.6" rx="0.8"/><path d="M990.5 975 V972 Q990.5 971.3 991.3 971.3 H996.3 Q997.1 971.3 997.1 972 V975 M998 975 V972 Q998 971.3 998.8 971.3 H1003.8 Q1004.6 971.3 1004.6 972 V975 M992.6 963.6 H995 M992.6 966.3 H995 M1000.1 963.6 H1002.5 M1000.1 966.3 H1002.5"/>
<path d="M1014 967.5 H1021 M1140.5 967.5 H1147.5 M1144 964 V971"/>
</g>
<rect x="1025" y="967" width="112.5" height="1.2" fill="#a5a5a5"/>
<circle cx="1090" cy="967.5" r="5" fill="#fff" stroke="#555" stroke-width="1"/>
<rect x="1154.5" y="958.5" width="78" height="19" fill="#ffffff" stroke="#c5cad8"/>
<rect x="1212" y="959" width="20" height="18" fill="#f5f6f9"/>
<path d="M1221.5 967 H1228 L1224.7 970 Z" fill="#999"/>
<text x="1158.5" y="972.3" font-size="12.5" font-weight="normal" fill="#1a1a1a" textLength="41.5" lengthAdjust="spacingAndGlyphs" >155,14%</text>
<g fill="none" stroke="#222" stroke-width="1.2">
<path d="M1241.5 961.5 L1246 966 M1241.5 961.5 V965 M1241.5 961.5 H1245"/>
<path d="M1255 961.5 L1250.5 966 M1255 961.5 V965 M1255 961.5 H1251.5"/>
<path d="M1241.5 975 L1246 970.5 M1241.5 975 V971.5 M1241.5 975 H1245"/>
<path d="M1255 975 L1250.5 970.5 M1255 975 V971.5 M1255 975 H1251.5"/>
</g>

<rect x="0" y="984" width="1280" height="40" fill="#1c1c1c"/>
<g fill="#ffffff">
<path d="M16 997.5 L22.7 996.6 V1003.3 H16 Z M23.8 996.4 L32.3 995.3 V1003.3 H23.8 Z M16 1004.4 H22.7 V1011.1 L16 1010.2 Z M23.8 1004.4 H32.3 V1012.4 L23.8 1011.3 Z"/>
</g>
<rect x="48" y="984" width="287.5" height="40" fill="#f0f0f0"/>
<circle cx="70.5" cy="1001.3" r="5.2" fill="none" stroke="#222" stroke-width="1.3"/>
<line x1="66.8" y1="1005" x2="60.3" y2="1011.5" stroke="#222" stroke-width="1.5"/>
<text x="88.6" y="1009.5" font-size="15" font-weight="normal" fill="#202020" textLength="42.2" lengthAdjust="spacingAndGlyphs" >Buscar</text>
<ellipse cx="276" cy="989.8" rx="6.8" ry="2.6" fill="#f9b45c"/><ellipse cx="278" cy="988.6" rx="3.5" ry="2" fill="#f9b45c"/>
<ellipse cx="292.5" cy="993.3" rx="8.6" ry="2.8" fill="#f9b45c"/><ellipse cx="292" cy="991" rx="4.5" ry="2.6" fill="#f9b45c"/>
<path d="M262.3 1016 Q265 1010.6 290 1010.6 Q320 1010.6 328 1013 Q326 1018 318 1018.5 Q300 1021 275 1020 Q262 1019 262.3 1016 Z" fill="#3ba7b5"/>
<path d="M268 1014 Q290 1011.5 312 1013 L312 1016 Q290 1014.5 268 1016.5 Z" fill="#9ad6d6"/>
<path d="M259.3 1007.5 Q285 1004.2 312.1 1007.5 V1010 Q285 1006.8 259.3 1010 Z" fill="#5aa060"/>
<path d="M260.3 1010 Q285 1007 312.1 1010 V1012.5 Q305 1011 300 1014 Q292 1009.5 281 1014 Q270 1010 262 1014 Z" fill="#d9d0e2"/>
<rect x="275.6" y="1004" width="6" height="12.9" fill="#e2a24e"/><rect x="299.2" y="1005.9" width="4.6" height="10" fill="#e2a24e"/><rect x="312.1" y="1007.9" width="3" height="7" fill="#e2a24e"/>
<path d="M269.5 995.5 V1006 M266 996.5 H273 M285.5 997.5 V1006 M282.5 998.5 H288.5 M298.5 999.5 V1006.6 M296 1000.5 H301" stroke="#4a3a4a" stroke-width="1.1"/>
<path d="M316.8 1002.3 Q317 995 322 995 Q327.4 995 327.4 1002.3 Z" fill="#4fae4a"/>
<rect x="303.1" y="999" width="12.3" height="9.6" fill="#d89060"/>
<rect x="315.1" y="1001.3" width="13.9" height="7.9" fill="#d08858"/>
<path d="M303.8 999 Q303.8 992 309.5 992 Q315.1 992 315.1 999 Z" fill="#4e9a6a"/>
<rect x="307.8" y="986.7" width="3.6" height="5.9" fill="#3e6a5a"/>
<ellipse cx="322" cy="1010.5" rx="7.3" ry="3.3" fill="#d2b8c6"/>
<g fill="none" stroke="#ffffff" stroke-width="1.3">
<path d="M352.5 996.5 H367.5 M352.5 1010.5 H367.5 M354 999.5 H364 V1007.5 H354 Z M367 999.5 V1001 M367 1003 V1004.5 M367 1006 V1007.5"/>
</g>
<path d="M399.4 996 H408 L410 998.5 H422.3 V1013.4 H399.4 Z" fill="#f5c24c"/>
<path d="M399.4 1000 H422.3 V1013.4 H399.4 Z" fill="#ffd866"/>
<rect x="405.5" y="1005" width="10.5" height="8.4" fill="#2f7ad8"/>
<rect x="408" y="1008" width="5.5" height="5.4" fill="#ffd866"/>
<rect x="390.6" y="1022" width="40.4" height="2" fill="#76b9ed"/>
<path d="M449 1012 Q444 1002 452 997 Q462 992 468 998 Q470 1002 465 1003 Q460 1004 462 1008 Q463 1013 455 1013 Q451 1013 449 1012 Z" fill="#a7c3d6"/>
<circle cx="452" cy="1002" r="1.7" fill="#e24a4a"/><circle cx="456" cy="998.5" r="1.7" fill="#f2c230"/><circle cx="461" cy="998" r="1.7" fill="#3aa35a"/><circle cx="452" cy="1007" r="1.7" fill="#2f7ad8"/>
<path d="M458 1012 L470.5 995.5 L472 996.5 L460 1013 Z" fill="#c98a3a"/>
<rect x="497" y="996" width="22" height="15" fill="#d9e3e8" stroke="#777" stroke-width="1"/>
<rect x="499" y="998" width="18" height="11" fill="#3a6a4a"/>
<path d="M503 1015 Q508 1005 520 994 Q512 1007 506 1016 Z" fill="#6ac04a"/>
<path d="M505 1010 L511 1012 M507 1006 L514 1007 M510 1002 L517 1002 M509 1009 L508 1003 M512 1005 L511 999" stroke="#3e8a2a" stroke-width="1.2"/>
<rect x="501" y="1012" width="14" height="2" fill="#999"/>
<circle cx="558" cy="1004" r="11.5" fill="#f7a21b"/>
<path d="M552 1009 Q552 1005 556 1005 Q558 1001 563 1002 Q567 1003 567 1007 Q570 1007 570 1010 Q570 1013 566 1013 H555 Q552 1013 552 1009 Z" fill="#ffffff"/>
<rect x="538" y="1022" width="41" height="2" fill="#76b9ed"/>
<circle cx="607" cy="1004" r="12" fill="#db4437"/>
<path d="M607 1004 L617.4 998 A12 12 0 0 1 601 1014.4 Z" fill="#0f9d58"/>
<path d="M607 1004 L601 1014.4 A12 12 0 0 1 596.6 998 Z" fill="#ffcd40"/>
<path d="M596.6 998 A12 12 0 0 1 617.4 998 H607 Z" fill="#db4437"/>
<circle cx="607" cy="1004" r="5.5" fill="#fff"/><circle cx="607" cy="1004" r="4.3" fill="#4285f4"/>
<rect x="587" y="1022" width="40" height="2" fill="#76b9ed"/>
<rect x="632" y="984" width="48" height="38" fill="#4a4a4a"/>
<rect x="644" y="992" width="24" height="24" rx="2.5" fill="#ff6200"/>
<path d="M647.3 996 L653.9 996.4 L649.5 1000.6 Z M654.8 1009.3 L660 1007.9 L662.1 1011.9 L655.8 1011.9 Z" fill="#fff"/>
<path d="M647.3 1011.7 Q648 1003 656 999 Q660 997 664.9 996 Q663.5 1000 662.3 1001.8 Q659.5 1006 656.2 1007.4 Q652 1010 647.3 1011.7 Z" fill="#fff"/>
<rect x="632" y="1022" width="48" height="2" fill="#76b9ed"/>
<g fill="none" stroke="#ffffff" stroke-width="1.1">
<path d="M961 999 Q959.5 1003.5 961 1008.5 M971 999 Q972.5 1003.5 971 1008.5 M962.5 997 Q966 995 969.5 997 M962.5 1010.5 Q966 1012.5 969.5 1010.5"/>
<rect x="962.5" y="1000.5" width="5.5" height="6.5" rx="1"/><path d="M968 1002.5 L971 1001 V1006.5 L968 1005"/>
<path d="M987.5 1002 V1011 Q987.5 1012 988.5 1012 H993 M987.5 1002 H995.5 V1008 M989 1002 V997 H994 V1002 M990.5 999 V1000 M992.5 999 V1000 M994 1010 L995.5 1011.5 L998 1008"/>
<path d="M1054.5 1000 Q1060 998 1063 1000" />
</g>
<path d="M1014 995.5 L1021.7 998.5 V1004 Q1021.7 1010 1014 1012.5 Q1006.3 1010 1006.3 1004 V998.5 Z" fill="#ffffff"/>
<path d="M1014 995.5 V1004 H1006.3 V998.5 Z M1014 1004 H1021.7 Q1021.7 1010 1014 1012.5 Z" fill="#1c1c1c" opacity="0.85"/>
<circle cx="1018.5" cy="1008" r="4.2" fill="#16a34a"/>
<path d="M1016.5 1008 L1018 1009.5 L1020.5 1006.5" stroke="#fff" stroke-width="1.1" fill="none"/>
<path d="M1030 1008 Q1030 1004 1034 1004 Q1036 999.5 1041 1000.5 Q1045 1001.5 1045 1005 Q1047.5 1005.5 1047.5 1008 Q1047.5 1010.5 1044.5 1010.5 H1033 Q1030 1010.5 1030 1008 Z" fill="#d4d4d4"/>
<path d="M1054.5 998 H1062 L1064 1000 H1069 V1012 H1054.5 Z" fill="#e9731c"/>
<rect x="1058" y="1002" width="9" height="6.5" fill="#f6c08a" stroke="#fff" stroke-width="0.8"/>
<g fill="none" stroke="#ffffff" stroke-width="1.1">
<path d="M1080.5 1001.5 Q1087 995.5 1093.5 1001.5" opacity="0.5"/><path d="M1082.5 1004.5 Q1087 1000.5 1091.5 1004.5" opacity="0.7"/><path d="M1084.5 1007.5 Q1087 1005.5 1089.5 1007.5"/>
<path d="M1082 1011.5 Q1086 1003 1093.5 998" stroke-width="0"/>
<path d="M1101.5 1001 H1105 L1109.5 996.5 V1011.5 L1105 1007 H1101.5 Z"/>
<path d="M1112 1001 Q1114 1004 1112 1007 M1114.5 998.5 Q1118 1004 1114.5 1009.5"/>
<path d="M1238.5 996.5 H1255.5 V1008.5 H1250 L1247 1012 L1244 1008.5 H1238.5 Z"/>
</g>
<circle cx="1087" cy="1010" r="1.3" fill="#fff"/>
<text x="1130" y="1008.2" font-size="13.5" font-weight="normal" fill="#ffffff" textLength="18.8" lengthAdjust="spacingAndGlyphs" >ESP</text><text x="1166.6" y="1000" font-size="13.5" font-weight="normal" fill="#ffffff" textLength="51.7" lengthAdjust="spacingAndGlyphs" >6:21 p. m.</text><text x="1166.6" y="1017" font-size="13.5" font-weight="normal" fill="#ffffff" textLength="51.1" lengthAdjust="spacingAndGlyphs" >18/5/2025</text>

</svg>
</body></html>
